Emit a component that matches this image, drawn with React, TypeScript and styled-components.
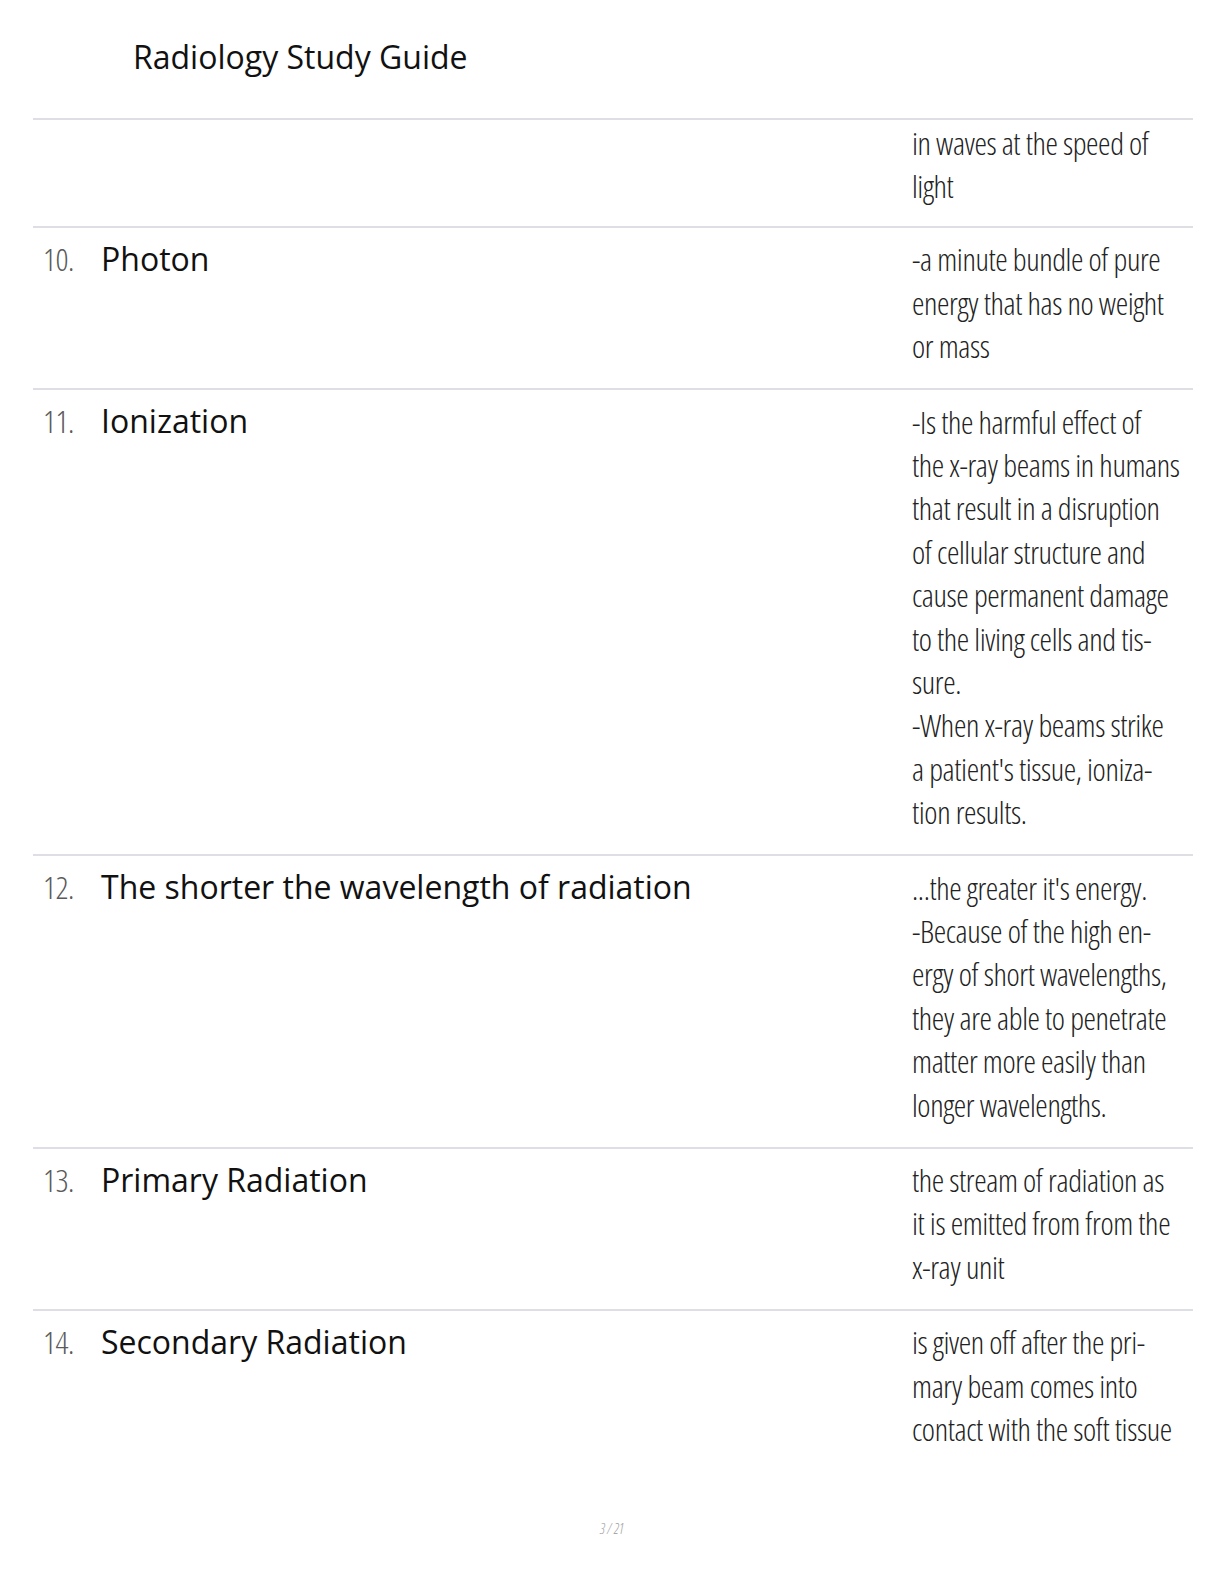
import React from "react";
import styled, { createGlobalStyle } from "styled-components";

const GlobalStyle = createGlobalStyle`
  html, body {
    margin: 0;
    padding: 0;
    background: #ffffff;
  }
  body {
    font-family: "Open Sans", "Noto Sans", sans-serif;
    color: #111111;
  }
`;

const Page = styled.div`
  width: 1224px;
  min-height: 1584px;
  box-sizing: border-box;
  display: flex;
  flex-direction: column;
`;

const Header = styled.header`
  height: 118px;
  box-sizing: border-box;
  padding: 35px 0 0 133px;
`;

const Title = styled.h1`
  margin: 0;
  font-family: "Open Sans", sans-serif;
  font-weight: 400;
  font-size: 32px;
  line-height: 44px;
  color: #111111;
`;

const Table = styled.div`
  margin-left: 33px;
  width: 1160px;
  display: flex;
  flex-direction: column;
`;

const Row = styled.div`
  display: grid;
  grid-template-columns: 58px 811px 1fr;
  padding-left: 10px;
  border-top: 2px solid #dedfe4;
`;

const Num = styled.div`
  padding-top: 9px;
  font-family: "Open Sans", sans-serif;
  font-weight: 300;
  font-stretch: 75%;
  font-size: 32px;
  letter-spacing: -0.5px;
  line-height: 43.4px;
  color: #5a5a5a;
`;

const Term = styled.div`
  padding-top: 9px;
  font-family: "Open Sans", sans-serif;
  font-weight: 400;
  font-size: 32px;
  line-height: 43.4px;
  color: #111111;
`;

const Def = styled.div<{ $continued?: boolean }>`
  padding-top: ${(p) => (p.$continued ? "1px" : "9.5px")};
  padding-bottom: ${(p) => (p.$continued ? "18px" : "20.5px")};
  font-family: "Open Sans", sans-serif;
  font-weight: 300;
  font-stretch: 75%;
  font-size: 31.5px;
  letter-spacing: -0.4px;
  line-height: 43.4px;
  color: #222222;
`;

const Line = styled.div`
  white-space: nowrap;
`;

const Footer = styled.footer`
  margin-top: 48px;
  text-align: center;
  font-family: "Open Sans", sans-serif;
  font-weight: 300;
  font-stretch: 75%;
  font-style: italic;
  font-size: 14px;
  line-height: 20px;
  color: #9a9a9a;
`;

type Entry = {
  num?: string;
  term?: string;
  lines: string[];
  continued?: boolean;
};

const entries: Entry[] = [
  { continued: true, lines: ["in waves at the speed of", "light"] },
  {
    num: "10.",
    term: "Photon",
    lines: ["-a minute bundle of pure", "energy that has no weight", "or mass"],
  },
  {
    num: "11.",
    term: "Ionization",
    lines: [
      "-Is the harmful effect of",
      "the x-ray beams in humans",
      "that result in a disruption",
      "of cellular structure and",
      "cause permanent damage",
      "to the living cells and tis-",
      "sure.",
      "-When x-ray beams strike",
      "a patient's tissue, ioniza-",
      "tion results.",
    ],
  },
  {
    num: "12.",
    term: "The shorter the wavelength of radiation",
    lines: [
      "...the greater it's energy.",
      "-Because of the high en-",
      "ergy of short wavelengths,",
      "they are able to penetrate",
      "matter more easily than",
      "longer wavelengths.",
    ],
  },
  {
    num: "13.",
    term: "Primary Radiation",
    lines: ["the stream of radiation as", "it is emitted from from the", "x-ray unit"],
  },
  {
    num: "14.",
    term: "Secondary Radiation",
    lines: ["is given off after the pri-", "mary beam comes into", "contact with the soft tissue"],
  },
];

export default function App() {
  return (
    <Page>
      <GlobalStyle />
      <Header>
        <Title>Radiology Study Guide</Title>
      </Header>
      <Table>
        {entries.map((e, i) => (
          <Row key={i}>
            <Num>{e.num}</Num>
            <Term>{e.term}</Term>
            <Def $continued={e.continued}>
              {e.lines.map((l, j) => (
                <Line key={j}>{l}</Line>
              ))}
            </Def>
          </Row>
        ))}
      </Table>
      <Footer>3 / 21</Footer>
    </Page>
  );
}
